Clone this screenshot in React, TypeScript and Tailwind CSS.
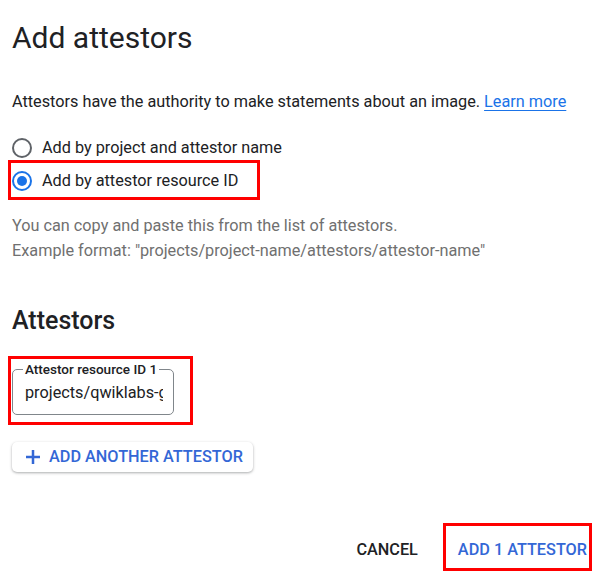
import React from "react";

function Radio({ checked }: { checked?: boolean }) {
  return (
    <svg width="20" height="20" viewBox="0 0 20 20" className="shrink-0">
      <circle cx="10" cy="10" r="9" fill="none" stroke={checked ? "#1a73e8" : "#5f6368"} strokeWidth="2" />
      {checked && <circle cx="10" cy="10" r="5" fill="#1a73e8" />}
    </svg>
  );
}

export default function App() {
  return (
    <div
      className="w-[606px] h-[580px] bg-white text-[#202124] px-3 flex flex-col overflow-hidden"
      style={{ fontFamily: "Roboto, 'Liberation Sans', sans-serif" }}
    >
      <h1 className="mt-[18px] text-[30px] leading-[40px] font-normal">Add attestors</h1>

      <p className="mt-[32px] text-[16.25px] leading-[24px]">
        Attestors have the authority to make statements about an image.{" "}
        <span className="text-[#1a73e8] underline underline-offset-[3px]">Learn more</span>
      </p>

      <div className="mt-[22px] flex flex-col gap-[9px]">
        <div className="flex items-center gap-[10px] h-[24px] text-[16.25px]">
          <Radio />
          <span>Add by project and attestor name</span>
        </div>
        <div className="relative w-fit flex items-center gap-[10px] h-[24px] text-[16.25px]">
          <Radio checked />
          <span>Add by attestor resource ID</span>
          <div className="absolute -left-[4px] -top-[9px] -bottom-[7px] -right-[22px] border-[3px] border-[#ff0000] pointer-events-none" />
        </div>
      </div>

      <div className="mt-[20px] text-[16.25px] leading-[25px] text-[#707070]">
        <div>You can copy and paste this from the list of attestors.</div>
        <div>Example format: "projects/project-name/attestors/attestor-name"</div>
      </div>

      <h2 className="mt-[42px] text-[25px] leading-[32px] font-medium">Attestors</h2>

      <div className="relative w-fit mt-[24px]">
        <fieldset className="w-[162px] h-[54px] border border-[#80868b] rounded-[5px] pl-[10px] pr-[6px] m-0">
          <legend className="px-[2px] text-[13.5px] leading-[16px] font-medium text-[#202124] whitespace-nowrap">
            Attestor resource ID 1
          </legend>
          <input
            readOnly
            value="projects/qwiklabs-gcp-attestor"
            className="block w-[140px] pl-[2px] text-[16.25px] leading-[22px] text-[#202124] bg-transparent outline-none mt-[5px]"
          />
        </fieldset>
        <div className="absolute -left-[4px] -top-[5px] -bottom-[10px] -right-[19px] border-[3px] border-[#ff0000] pointer-events-none" />
      </div>

      <div className="mt-[27px]">
        <button className="flex items-center h-[30px] w-[241px] pl-[13px] gap-[8px] bg-white rounded-[5px] shadow-[0_1px_3px_rgba(60,64,67,0.3),0_1px_2px_rgba(60,64,67,0.15)] text-[#3367d6] text-[16.25px] font-medium">
          <svg width="16" height="16" viewBox="0 0 16 16">
            <path d="M8 1v14M1 8h14" stroke="#3367d6" strokeWidth="2.5" />
          </svg>
          <span>ADD ANOTHER ATTESTOR</span>
        </button>
      </div>

      <div className="mt-[68px] flex justify-end items-center gap-[40px] pr-[7px] text-[16.25px] leading-[20px] font-medium">
        <span className="text-[#202124]">CANCEL</span>
        <div className="relative">
          <span className="text-[#3367d6]">ADD 1 ATTESTOR</span>
          <div className="absolute -left-[15px] -right-[5px] -top-[17px] -bottom-[11px] border-[3px] border-[#ff0000] pointer-events-none" />
        </div>
      </div>
    </div>
  );
}
